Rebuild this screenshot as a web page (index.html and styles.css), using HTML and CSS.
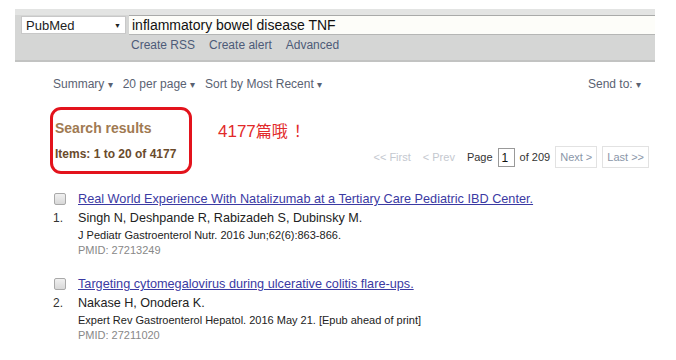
FILE: index.html
```html
<!DOCTYPE html>
<html lang="en">
<head>
    <meta charset="UTF-8" />
    <title>PubMed - inflammatory bowel disease TNF</title>
    <link rel="stylesheet" href="styles.css">
</head>
<body>
    <!-- SEARCH BAR -->
    <div class="searchbar">
        <div class="search-row">
            <div class="db-select">PubMed<span class="db-arrow">&#9660;</span></div>
            <div class="term-input">inflammatory bowel disease TNF</div>
        </div>
        <div class="search-links">
            <a href="#rss">Create RSS</a>
            <a href="#alert">Create alert</a>
            <a href="#advanced">Advanced</a>
        </div>
    </div>

    <div class="content">
        <!-- DISPLAY OPTIONS -->
        <div class="display-bar">
            <a href="#format">Summary <span class="caret">&#9662;</span></a>
            <a href="#perpage">20 per page <span class="caret">&#9662;</span></a>
            <a href="#sort">Sort by Most Recent <span class="caret">&#9662;</span></a>
            <a href="#send" class="send-to">Send to: <span class="caret">&#9662;</span></a>
        </div>

        <!-- RESULT COUNT + PAGER -->
        <div class="results-head">
            <div class="count-box">
                <h2>Search results</h2>
                <div class="items">Items: 1 to 20 of 4177</div>
            </div>
            <div class="note" lang="zh-CN">4177<span class="cjk">篇哦<span class="bang">！</span></span></div>
            <div class="pager">
                <span class="off">&lt;&lt; First</span>
                <span class="off">&lt; Prev</span>
                <span>Page</span>
                <span class="page-box">1</span>
                <span>of 209</span>
                <a href="#next" class="pg-btn">Next &gt;</a>
                <a href="#last" class="pg-btn">Last &gt;&gt;</a>
            </div>
        </div>

        <!-- RESULTS -->
        <div class="rslt">
            <div class="rslt-side">
                <span class="check"></span>
                <span class="num">1.</span>
            </div>
            <div class="rslt-body">
                <a href="#27213249" class="title">Real World Experience With Natalizumab at a Tertiary Care Pediatric IBD Center.</a>
                <div class="authors">Singh N, Deshpande R, Rabizadeh S, Dubinsky M.</div>
                <div class="journal">J Pediatr Gastroenterol Nutr. 2016 Jun;62(6):863-866.</div>
                <div class="pmid">PMID: 27213249</div>
            </div>
        </div>

        <div class="rslt">
            <div class="rslt-side">
                <span class="check"></span>
                <span class="num">2.</span>
            </div>
            <div class="rslt-body">
                <a href="#27211020" class="title">Targeting cytomegalovirus during ulcerative colitis flare-ups.</a>
                <div class="authors">Nakase H, Onodera K.</div>
                <div class="journal">Expert Rev Gastroenterol Hepatol. 2016 May 21. [Epub ahead of print]</div>
                <div class="pmid">PMID: 27211020</div>
            </div>
        </div>
    </div>
</body>
</html>
```

FILE: styles.css
```css
body { margin: 0; background: #fff; font-family: "Liberation Sans", Arial, sans-serif; color: #333; }
a { text-decoration: none; }

.searchbar { margin: 9px 0 0 15px; width: 640px; height: 45px; background: #d5d6d5; border-top: 6px solid #e3e4e3; border-bottom: 2px solid #c2c3c2; }
.search-row { display: flex; align-items: center; height: 20px; }
.db-select { display: flex; justify-content: space-between; align-items: center; box-sizing: border-box; width: 105px; height: 18px; margin-left: 6px; padding: 0 4px; background: #fff; border: 1px solid #c8c8c8; font-size: 13px; color: #222; }
.db-arrow { font-size: 7px; color: #222; }
.term-input { flex: 1; box-sizing: border-box; height: 20px; margin-left: 3px; padding: 0 3px; background: #fdfdf9; border-top: 1px solid #a9aaa9; border-bottom: 1px solid #b5b6b5; font-size: 14px; line-height: 18px; color: #111; }
.search-links { display: flex; gap: 14px; padding: 3px 0 0 116px; font-size: 12px; }
.search-links a { color: #4d5b78; }

.content { width: 602px; padding-left: 53px; }

.display-bar { display: flex; gap: 10px; margin-top: 14px; font-size: 12px; line-height: 16px; }
.display-bar a { color: #5a6272; }
.display-bar .send-to { margin-left: auto; margin-right: 14px; }
.caret { font-size: 10px; }

.results-head { display: flex; align-items: flex-start; margin-top: 14px; }
.count-box { box-sizing: border-box; width: 142px; height: 67px; margin-left: -3px; padding: 9px 2px 0; border: 3px solid #e3131c; border-radius: 11px; }
.count-box h2 { margin: 0 0 9px; font-size: 14px; line-height: 18px; color: #a07a52; }
.items { font-size: 12px; line-height: 16px; font-weight: bold; color: #6a4b2c; }
.note { margin: 13px 0 0 26px; font-size: 17px; line-height: 20px; color: #e22a2a; }
.note .cjk { font-family: "Noto Sans CJK SC", sans-serif; font-size: 16px; }
.note .bang { margin-left: 6px; }

.pager { display: flex; align-items: center; gap: 5px; margin: 39px 6px 0 auto; font-size: 11px; color: #333; }
.pager .off { color: #c4c8cf; margin-right: 7px; }
.page-box { box-sizing: border-box; width: 17px; height: 19px; padding: 2px 3px; border: 1px solid #999; font-size: 12px; color: #111; }
.pg-btn { padding: 4px 4px; border: 1px solid #e2e2e2; color: #8a96a8; font-size: 11px; }

.rslt { display: flex; margin-top: 16px; }
.rslt + .rslt { margin-top: 17px; }
.rslt-side { display: flex; flex-direction: column; width: 25px; }
.check { box-sizing: border-box; width: 12px; height: 12px; margin: 3px 0 0 1px; border: 1px solid #a9a9a9; border-radius: 2px; background: linear-gradient(#f0f0f0, #d8d8d8); }
.num { margin-top: 5px; font-size: 12px; line-height: 16px; color: #333; }
.rslt-body { display: flex; flex-direction: column; }
.title { font-size: 12.7px; line-height: 18px; color: #3b3aa3; text-decoration: underline; }
.authors { margin-top: 1px; font-size: 12.6px; line-height: 18px; color: #222; }
.journal { font-size: 11px; line-height: 16px; color: #222; }
.pmid { font-size: 11px; line-height: 15px; color: #888; }
```
